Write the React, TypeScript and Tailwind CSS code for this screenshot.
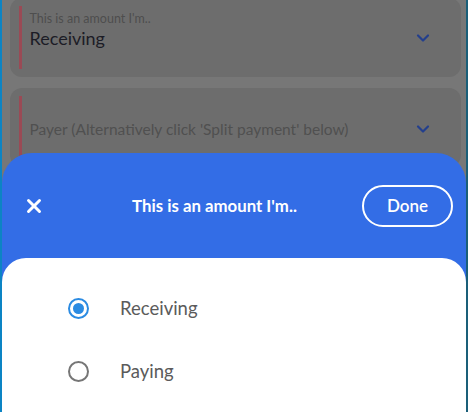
import { ChevronDown, X } from 'lucide-react';

function Bar() {
  return <div className="h-[63px] w-[2.5px] shrink-0 bg-[#9a4a55]" />;
}

export default function App() {
  return (
    <div
      className="relative h-[412px] w-[468px] overflow-hidden border-l-2 border-r-2 border-l-[#0c84c4] border-r-[#1a5f79] bg-[#777777]"
      style={{ fontFamily: 'Lato, "Noto Sans", sans-serif' }}
    >
      <div className="mt-[-2px] flex flex-col gap-[11px] pl-[8px] pr-[5px]">
        <div className="flex rounded-[12px] bg-[#6d6d6d] py-2 pl-[9px] pr-[28px]">
          <Bar />
          <div className="flex-1 pl-[8px] pt-[5px]">
            <div className="text-[12.5px] leading-[15px] text-[#4e4e4e]">This is an amount I'm..</div>
            <div className="mt-[1px] flex items-center">
              <span className="flex-1 text-[18px] leading-[22px] text-[#1c1c26]">Receiving</span>
              <ChevronDown className="h-[20px] w-[20px] text-[#233f8d]" strokeWidth={2.6} />
            </div>
          </div>
        </div>
        <div className="flex rounded-[12px] bg-[#6d6d6d] py-2 pl-[9px] pr-[28px]">
          <Bar />
          <div className="flex flex-1 items-start pl-[8px] pt-[23px]">
            <span className="flex-1 text-[15.5px] leading-[20px] text-[#505050]">
              Payer (Alternatively click 'Split payment' below)
            </span>
            <ChevronDown className="h-[20px] w-[20px] text-[#233f8d]" strokeWidth={2.6} />
          </div>
        </div>
      </div>

      <div className="absolute inset-x-0 bottom-0 top-[153px] flex flex-col rounded-t-[30px] bg-[#336de6]">
        <div className="flex h-[105px] items-center pl-[21px] pr-[13px]">
          <X className="h-[22px] w-[22px] text-white" strokeWidth={3.2} />
          <div className="flex-1 pl-[72px] text-center text-[16.8px] font-bold text-white">This is an amount I'm..</div>
          <button className="ml-[50px] h-[42px] w-[91px] rounded-full border-2 border-white text-[17px] font-semibold text-white">
            Done
          </button>
        </div>
        <div className="flex-1 rounded-t-[24px] bg-white pt-[19px]">
          <div className="flex h-[63px] items-center pl-[66px]">
            <div className="flex h-[21px] w-[21px] items-center justify-center rounded-full border-[2.5px] border-[#2b8be2]">
              <div className="h-[11px] w-[11px] rounded-full bg-[#2b8be2]" />
            </div>
            <span className="ml-[31px] text-[18.5px] text-[#5b5b5b]">Receiving</span>
          </div>
          <div className="flex h-[63px] items-center pl-[66px]">
            <div className="h-[21px] w-[21px] rounded-full border-[2.5px] border-[#767676]" />
            <span className="ml-[31px] text-[18.5px] text-[#5b5b5b]">Paying</span>
          </div>
        </div>
      </div>
    </div>
  );
}
